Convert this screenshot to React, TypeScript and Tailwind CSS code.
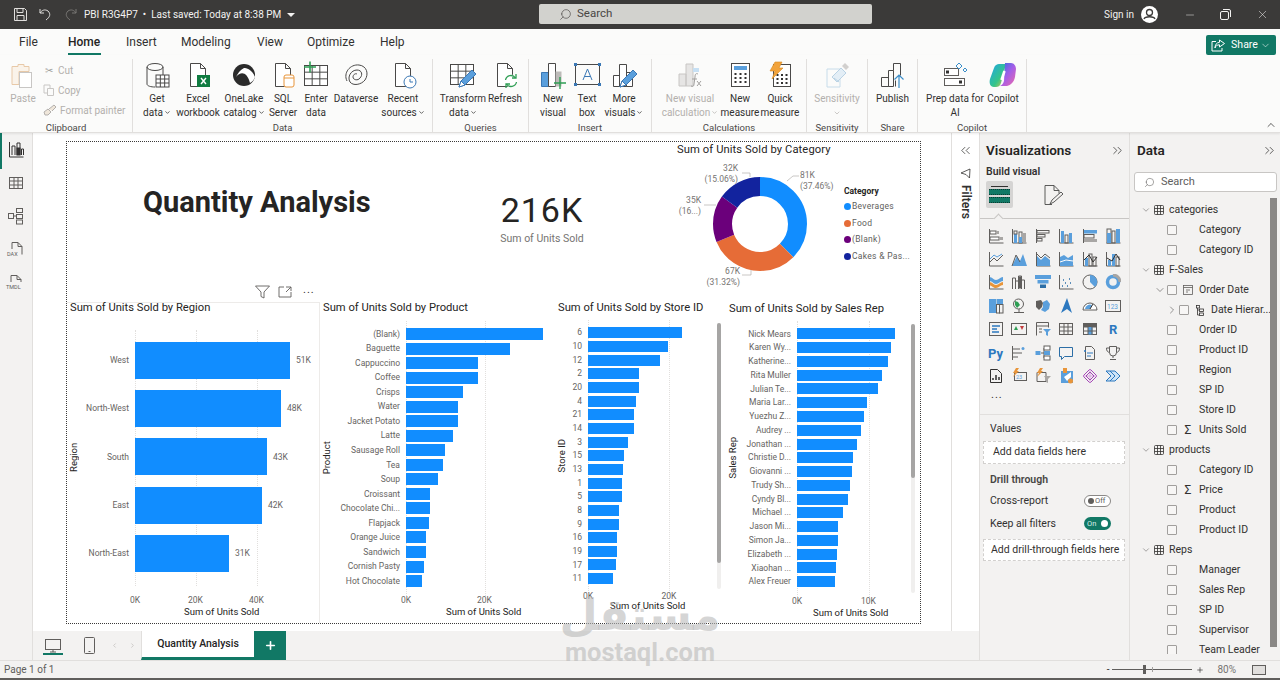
import { ReactNode } from 'react'
import { ChevronDown, ChevronRight, ChevronUp, ChevronsLeft, ChevronsRight, Minus, Plus, Search, X } from 'lucide-react'

const BLUE = '#118dff'
const DK = '#605e5c'
const LB = '#5a9fdc'
const GR = '#a8a6a4'

type Bar = { label: string; len: number; value?: string }

type ChartProps = {
    title: string
    axis: string
    bars: Bar[]
    width: string
    titleBox: string
    axisBox: string
    labelBox: string
    rowBox: string
    barBox: string
    plotLeft: number
    ticks: { at: number; label: string }[]
    footBox: string
    axisTitleLeft: number
}

const BarChart = (c: ChartProps) => (
    <div className={`relative flex flex-col shrink-0 font-['Roboto',sans-serif] ${c.width}`}>
        <div className={`text-[11.2px] leading-[12px] text-[#252423] whitespace-nowrap ${c.titleBox}`}>{c.title}</div>
        <div className="relative flex">
            <div className={`flex items-center justify-center text-[9.5px] text-[#252423] [writing-mode:vertical-rl] rotate-180 ${c.axisBox}`}>{c.axis}</div>
            <div className="relative flex flex-col">
                {c.ticks.map(t => (
                    <div key={t.label} className="absolute top-[-6px] bottom-[-8px] w-0 border-l border-dotted border-[#e1dfdd]" style={{ left: c.plotLeft + t.at }} />
                ))}
                {c.bars.map(b => (
                    <div key={b.label} className={`relative flex items-center ${c.rowBox}`}>
                        <span className={`shrink-0 text-right text-[8.5px] text-[#666462] whitespace-nowrap ${c.labelBox}`}>{b.label}</span>
                        <div className={`bg-[#118dff] ${c.barBox}`} style={{ width: b.len }} />
                        {b.value && <span className="ml-[6px] text-[8.5px] text-[#666462]">{b.value}</span>}
                    </div>
                ))}
            </div>
        </div>
        <div className={`relative ${c.footBox}`}>
            {c.ticks.map(t => (
                <span key={t.label} className="absolute top-0 -translate-x-1/2 text-[8.5px] leading-[12px] text-[#666462]" style={{ left: t.at + c.plotLeft + c.axisTitleLeft }}>{t.label}</span>
            ))}
        </div>
    </div>
)

const regionBars: Bar[] = [
    { label: 'West', len: 155, value: '51K' },
    { label: 'North-West', len: 146, value: '48K' },
    { label: 'South', len: 132, value: '43K' },
    { label: 'East', len: 127, value: '42K' },
    { label: 'North-East', len: 94, value: '31K' },
]
const productBars: Bar[] = [
    ['(Blank)', 137], ['Baguette', 104], ['Cappuccino', 72], ['Coffee', 72], ['Crisps', 57], ['Water', 52], ['Jacket Potato', 52], ['Latte', 47],
    ['Sausage Roll', 39], ['Tea', 37], ['Soup', 32], ['Croissant', 24], ['Chocolate Chi...', 24], ['Flapjack', 23], ['Orange Juice', 20], ['Sandwich', 19.5], ['Cornish Pasty', 17.5], ['Hot Chocolate', 16],
].map(([label, len]) => ({ label: label as string, len: len as number }))
const storeBars: Bar[] = [
    ['6', 94], ['10', 80], ['12', 72], ['2', 51], ['20', 51], ['4', 48], ['21', 46], ['14', 46], ['3', 40], ['15', 36], ['13', 35], ['1', 34], ['5', 34], ['8', 31], ['9', 31], ['16', 29], ['19', 29], ['17', 28], ['11', 25],
].map(([label, len]) => ({ label: label as string, len: len as number }))
const repBars: Bar[] = [
    ['Nick Mears', 98], ['Karen Wy...', 94], ['Katherine...', 91], ['Rita Muller', 85], ['Julian Te...', 81], ['Maria Lar...', 70], ['Yuezhu Z...', 67], ['Audrey ...', 64], ['Jonathan ...', 60], ['Christie D...', 56],
    ['Giovanni ...', 55], ['Trudy Sh...', 53], ['Cyndy Bl...', 51], ['Michael ...', 46], ['Jason Mi...', 41], ['Simon Ja...', 41], ['Elizabeth ...', 40], ['Xiaohan ...', 39], ['Alex Freuer', 38],
].map(([label, len]) => ({ label: label as string, len: len as number }))

const Ic = ({ children, s = 28, v = 28 }: { children: ReactNode; s?: number; v?: number }) => (
    <svg width={s} height={s} viewBox={`0 0 ${v} ${v}`} fill="none" stroke="#4a4948" strokeWidth="1">{children}</svg>
)

const Doc = ({ c = '#4a4948' }: { c?: string }) => <path d="M6.5 2.5h10l5 5v18h-15zM16.5 2.5v5h5" stroke={c} fill="#fff" />
const GridBox = ({ x, y, w, h, c = '#4a4948' }: { x: number; y: number; w: number; h: number; c?: string }) => (
    <g stroke={c}>
        <rect x={x} y={y} width={w} height={h} fill="#fff" />
        <path d={`M${x} ${y + h / 3}h${w}M${x} ${y + (2 * h) / 3}h${w}M${x + w / 3} ${y}v${h}M${x + (2 * w) / 3} ${y}v${h}`} />
    </g>
)
const Bars3 = ({ c = '#4a4948' }: { c?: string }) => <path d="M3.5 25.5v-11h6v11zM9.5 25.5v-22h7v22zM16.5 25.5v-14h6v14z" stroke={c} fill="#fff" />
const Pencil = () => <g><path d="M10 26l2-6 11-11 4 4-11 11z" fill="#5a9fdc" stroke="#3b78b5" /><path d="M10 26l2-6 4 4z" fill="#fff" stroke="#3b78b5" /></g>

const ribbonIcons: Record<string, ReactNode> = {
    get: <Ic><ellipse cx="12" cy="6" rx="8" ry="3.5" /><path d="M4 6v17c0 2 4 3 8 3M20 6v8" /><GridBox x={13} y={14} w={13} h={12} /></Ic>,
    excel: <Ic><Doc /><rect x="13" y="14" width="13" height="12" fill="#107c41" stroke="none" /><path d="M17 17l5 6M22 17l-5 6" stroke="#fff" strokeWidth="1.4" /></Ic>,
    lake: <Ic><circle cx="14" cy="14" r="11" fill="#2b2b2b" stroke="none" /><path d="M6 16c5-6 11-5 14 6 2-1 4-3 5-6-3-8-9-9-11-9-4 2-6 5-8 9z" fill="#fff" stroke="none" /></Ic>,
    sql: <Ic><Doc /><rect x="15" y="14" width="10" height="12" rx="2" fill="#fff" stroke="#e8953a" /><path d="M15 17h10" stroke="#e8953a" /></Ic>,
    enter: <Ic><GridBox x={2.5} y={4.5} w={23} h={20} /><path d="M8 0.5v11M2 6h12" stroke="#2f9e54" strokeWidth="1.6" /></Ic>,
    dataverse: <Ic><path d="M5 20C1 12 8 3 17 4c8 1 10 9 6 15-4 5-12 6-15 2C5 16 9 9 15 9c5 0 6 5 3 8-2 3-7 2-7-1 0-2 2-4 4-3" /></Ic>,
    recent: <Ic><Doc /><circle cx="21" cy="21" r="6" fill="#fff" stroke="#3b78b5" /><path d="M21 18v3h3" stroke="#3b78b5" /></Ic>,
    transform: <Ic><GridBox x={1.5} y={3.5} w={23} h={20} /><Pencil /></Ic>,
    refresh: <Ic><Doc /><circle cx="20" cy="20" r="6.5" fill="#fff" stroke="none" /><path d="M14.5 19a5.5 5.5 0 0 1 10-2M25.5 21a5.5 5.5 0 0 1-10 2" stroke="#2f9e54" strokeWidth="1.3" /><path d="M25 13v4h-4M15 27v-4h4" stroke="#2f9e54" strokeWidth="1.3" /></Ic>,
    newvisual: <Ic><path d="M2.5 25.5v-14h7v14z" fill="#5a9fdc" stroke="#3b78b5" /><path d="M9.5 25.5v-23h7v23z" fill="#fff" /><path d="M16.5 25.5v-15h6v15z" fill="#bdbbb9" stroke="none" /><path d="M21 16v12M15 22h12" stroke="#2f9e54" strokeWidth="1.4" /></Ic>,
    textbox: <Ic><rect x="2.5" y="3.5" width="24" height="20" stroke="#4a4948" /><rect x="1" y="2" width="3" height="3" fill="#3b78b5" stroke="none" /><rect x="25" y="2" width="3" height="3" fill="#3b78b5" stroke="none" /><rect x="1" y="22" width="3" height="3" fill="#3b78b5" stroke="none" /><rect x="25" y="22" width="3" height="3" fill="#3b78b5" stroke="none" /><path d="M10 19l4.5-11 4.5 11M11.5 15.5h6" stroke="#3b78b5" /></Ic>,
    more: <Ic><Bars3 /><Pencil /></Ic>,
    calc: <Ic><path d="M3 25V13h7v12zM10 25V3h7v22z" fill="#e6e5e4" stroke="#c8c6c4" /><path d="M17 7h6v4h-6z" fill="#c7e0f4" stroke="none" /><path d="M22 13c-2-1-3 0-3 3l-1 7c0 2-1 3-3 2M16 18h5M21 20l4 5M25 20l-4 5" stroke="#a19f9d" /></Ic>,
    measure: <Ic><rect x="5.5" y="2.5" width="18" height="23" stroke="#4a4948" fill="#fff" /><rect x="8" y="5" width="13" height="4" fill="#5a9fdc" stroke="none" /><path d="M8.5 13h2M13.5 13h2M18.5 13h2M8.5 17h2M13.5 17h2M18.5 17h2M8.5 21h2M13.5 21h2M18.5 21h2" stroke="#323130" strokeWidth="2" /></Ic>,
    quick: <Ic><rect x="7.5" y="3.5" width="17" height="22" stroke="#4a4948" fill="#fff" /><path d="M10.5 14h2M15 14h2M19.5 14h2M10.5 18h2M15 18h2M19.5 18h2M10.5 22h2M15 22h2M19.5 22h2" stroke="#323130" strokeWidth="2" /><path d="M9 1h7l-3 6h4L6 18l3-8H4z" fill="#f2a33a" stroke="#d98a1f" strokeWidth="0.6" /></Ic>,
    sens: <Ic><path d="M4 8h13v18H4z" stroke="#c7dcea" /><path d="M9 16l9-9 5 5-9 9z" fill="#e3eef6" stroke="#b9d2e4" /><path d="M19 5l3-3 4 4-3 3z" fill="#d2d0ce" stroke="none" /><path d="M11 17l5 4" stroke="#b9d2e4" /></Ic>,
    publish: <Ic><path d="M2.5 25.5v-9h7v9zM9.5 25.5v-16h5v16zM14.5 9.5v-7h7v12" /><path d="M16.5 25.5v-6" /><path d="M20 27V14M15.5 18.5L20 14l4.5 4.5" stroke="#3b8ec9" strokeWidth="1.2" /></Ic>,
    prep: <Ic><rect x="3.5" y="7.5" width="14" height="7" stroke="#605e5c" fill="#fff" /><rect x="3.5" y="17.5" width="20" height="7" stroke="#605e5c" fill="#fff" /><rect x="5" y="9.5" width="3" height="3" fill="#323130" stroke="none" /><rect x="18" y="19.5" width="3" height="3" fill="#323130" stroke="none" /><path d="M18 2l3 3-3 3-3-3zM24 7l2 2-2 2-2-2z" stroke="#3b8ec9" /></Ic>,
    copilot: (
        <svg width="28" height="28" viewBox="0 0 28 28">
            <defs>
                <linearGradient id="cpA" x1="0" y1="0" x2="1" y2="1"><stop offset="0" stopColor="#1fa5e8" /><stop offset="0.6" stopColor="#35c58a" /><stop offset="1" stopColor="#f4c13c" /></linearGradient>
                <linearGradient id="cpB" x1="0" y1="0" x2="1" y2="1"><stop offset="0" stopColor="#2a6fe0" /><stop offset="0.5" stopColor="#a45ee8" /><stop offset="1" stopColor="#f06aa8" /></linearGradient>
            </defs>
            <path d="M10 3h7l-5 19c-1 3-3 4-5 4H5C1 26 0 22 1 18L5 7c1-3 3-4 5-4z" fill="url(#cpA)" />
            <path d="M16 2h6c3 0 5 3 5 6l-1 8c-1 5-4 8-8 9h-7c2-1 3-2 4-5z" fill="url(#cpB)" />
            <path d="M15.5 10c-1 3-2 6-3 9" stroke="#fff" strokeWidth="2.6" />
        </svg>
    ),
    paste: <Ic><path d="M3 5.5h6v-2h6v2h5v5H10v13H3z" stroke="#e8c9a8" fill="#faf3ea" /><rect x="10.5" y="11.5" width="12" height="15" stroke="#c8c6c4" fill="#fff" /></Ic>,
}

const RibbonBtn = ({ w, icon, lines, off, arrow }: { w: string; icon: string; lines: string[]; off?: boolean; arrow?: boolean }) => (
    <div className={`flex flex-col items-center shrink-0 ${w}`}>
        <div className="h-[31px] mb-[2px] flex items-center justify-center">{ribbonIcons[icon]}</div>
        <div className={`text-[10px] leading-[13.5px] text-center whitespace-nowrap ${off ? 'text-[#b3b0ad]' : 'text-[#323130]'}`}>
            {lines.map((l, i) => (
                <div key={l}>{l}{arrow && i === lines.length - 1 && <ChevronDown className="inline ml-[1px]" size={7} strokeWidth={2.5} />}</div>
            ))}
        </div>
    </div>
)

const Group = ({ w, pl, name, children }: { w: string; pl: string; name: string; children: ReactNode }) => (
    <div className={`relative flex flex-col shrink-0 h-[74px] border-r border-[#e1dfdd] ${w}`}>
        <div className={`flex ${pl}`}>{children}</div>
        <div className="mt-auto text-center text-[9.5px] leading-[10px] text-[#4a4948]">{name}</div>
    </div>
)

const g = { fill: 'none', stroke: DK }
const vizIcons: ReactNode[] = [
    <g {...g}><path d="M1.5 1v14h14" /><rect x="2" y="3" width="6" height="3" fill="#fff" /><rect x="8" y="3" width="3" height="3" fill={GR} stroke="none" /><rect x="2" y="9" width="9" height="3" fill="#fff" /><rect x="11" y="9" width="4" height="3" fill={GR} stroke="none" /></g>,
    <g {...g}><path d="M1.5 1v14h14" /><rect x="3" y="6" width="3" height="9" fill={LB} stroke="none" /><rect x="3" y="3" width="3" height="3" /><rect x="8" y="4" width="3" height="11" /><rect x="8" y="9" width="3" height="6" fill={LB} stroke="none" /><rect x="12" y="5" width="3" height="10" fill={GR} stroke="none" /></g>,
    <g {...g}><path d="M1.5 1v14" /><rect x="2" y="2.5" width="12" height="2.5" /><rect x="2" y="6.5" width="8" height="2.5" /><rect x="2" y="10.5" width="5" height="2.5" /></g>,
    <g {...g}><path d="M1.5 1v14h14" /><rect x="3" y="3" width="3" height="12" fill={LB} stroke="none" /><rect x="7" y="7" width="3" height="8" /><rect x="11" y="5" width="3" height="10" fill={LB} stroke="none" /></g>,
    <g {...g}><path d="M1.5 1v14" /><rect x="2" y="2" width="13" height="3.5" fill={LB} stroke="none" /><rect x="2" y="6.5" width="10" height="3.5" /><rect x="2" y="11" width="13" height="3" fill={GR} stroke="none" /></g>,
    <g {...g}><path d="M1.5 15h14" /><rect x="2" y="1" width="4" height="14" /><rect x="2" y="5" width="4" height="10" fill={LB} stroke="none" /><rect x="7" y="3" width="3" height="12" /><rect x="11" y="1" width="4" height="14" fill={LB} stroke="none" /></g>,
    <g {...g}><path d="M1.5 1v14h14" /><path d="M2 11l4-4 3 3 6-6" /><path d="M2 8l4-4 3 2 5-3" stroke={LB} /></g>,
    <g {...g}><path d="M1 15l5-10 3 5 3-7 4 12z" fill={LB} stroke="none" /><path d="M1 15l4-11 4 7" /></g>,
    <g {...g}><path d="M1.5 1v14h14" /><path d="M2 5l4 4 4-4 5 4v6H2z" fill={LB} stroke="none" /><path d="M2 3l4 4 4-4 5 4" /></g>,
    <g {...g}><path d="M1.5 1v14h14" /><path d="M2 6l4-2 4 3 5-3v11H2z" fill={LB} stroke="none" /><path d="M2 11l6-2 7 1" stroke="#fff" /></g>,
    <g {...g}><path d="M1.5 1v14h14" /><rect x="3" y="7" width="3" height="8" fill={LB} stroke="none" /><rect x="7" y="3" width="3" height="12" /><rect x="11" y="6" width="3" height="9" /><path d="M2 9l5-5 4 7 4-5" stroke="#323130" /></g>,
    <g {...g}><path d="M1.5 1v14h14" /><rect x="3" y="9" width="3" height="6" fill={LB} stroke="none" /><rect x="7" y="3" width="3" height="12" fill={LB} stroke="none" /><rect x="11" y="6" width="3" height="9" /><path d="M2 7l5 3 4-7 4 6" stroke="#323130" /></g>,
    <g {...g}><path d="M1 3c4 0 4 3 7 3s4-3 7-3v4c-3 0-4 3-7 3S5 7 1 7z" fill={LB} stroke="none" /><path d="M1 8c4 0 4 3 7 3s4-3 7-3v3c-3 0-4 3-7 3s-3-2-7-3z" fill="#e8953a" stroke="none" /><path d="M1.5 1v14h14" /></g>,
    <g {...g}><path d="M1.5 15V4h3v11M4.5 15V7h3v8M7.5 15V2h3v13M10.5 15V6h3v9" /><rect x="8" y="2.5" width="2" height="12" fill={DK} stroke="none" /></g>,
    <g><rect x="0" y="1" width="16" height="4" fill={LB} /><rect x="2.5" y="6" width="11" height="3.5" fill={LB} /><rect x="5" y="10.5" width="6" height="3.5" fill="#2c6ea6" /></g>,
    <g {...g}><path d="M1.5 1v14h14" /><path d="M4 12h1M7 9h1M5 6h1M11 5h1M12 9h1M9 12h1" stroke="#2c6ea6" strokeWidth="1.6" /></g>,
    <g {...g}><circle cx="8" cy="8" r="7" /><path d="M8 1v7l5 5a7 7 0 0 0-5-12z" fill={LB} stroke="none" /></g>,
    <g fill="none"><circle cx="8" cy="8" r="5.5" stroke={LB} strokeWidth="3.5" /><path d="M8 1a7 7 0 0 1 7 7" stroke={GR} strokeWidth="3" /></g>,
    <g {...g}><rect x="1" y="1" width="7" height="14" fill={LB} stroke="none" /><rect x="8.5" y="1" width="6.5" height="5" fill={LB} stroke="none" /><rect x="8.5" y="6.5" width="3" height="8.5" /><rect x="11.5" y="6.5" width="3.5" height="8.5" /></g>,
    <g {...g}><circle cx="7.5" cy="6" r="5" /><path d="M4 3l3 1 2 3-3 3-2-3z" fill="#2f9e54" stroke="none" /><path d="M3 14.5h10M8 11v3" /></g>,
    <g><path d="M1 3l5-1 2 3-1 4-3 3-3-3z" fill={DK} /><path d="M8 4l4-2 3 4-1 5-4 3-4-2 2-3z" fill={LB} /></g>,
    <g><path d="M9 0l5 15-5-4-6 4z" fill="#2c78bf" /></g>,
    <g {...g}><path d="M1 12a7 7 0 0 1 14 0z" fill="#fff" /><path d="M3 11a5 5 0 0 1 7-4l-2 4z" fill={LB} stroke="none" /><path d="M8 11l3-5" stroke="#323130" /></g>,
    <g {...g}><rect x="0.5" y="2.5" width="15" height="11" /><text x="2" y="11" fontSize="6.5" fill={LB} stroke="none" fontFamily="Roboto">123</text></g>,
    <g {...g}><rect x="1.5" y="1.5" width="13" height="13" /><path d="M4 5h8M4 8h5M4 11h7" stroke="#2c78bf" strokeWidth="1.4" /></g>,
    <g {...g}><rect x="0.5" y="2.5" width="15" height="11" /><path d="M3 9l2-4 2 4z" fill="#2f9e54" stroke="none" /><path d="M9 5h4l-2 4z" fill="#c43e3e" stroke="none" /></g>,
    <g {...g}><path d="M1.5 14.5v-13h12v5M1.5 5h12M4 8h3M4 11h3" /><path d="M8 8h8l-3 3v4l-2-1v-3z" fill={LB} stroke="none" /></g>,
    <g {...g}><rect x="1.5" y="2.5" width="13" height="11" /><path d="M1.5 6h13M1.5 10h13M6 2.5v11M10 2.5v11" /></g>,
    <g {...g}><rect x="1.5" y="2.5" width="13" height="11" /><rect x="1.5" y="2.5" width="13" height="3.5" fill={DK} /><rect x="6" y="6" width="4.5" height="7.5" fill={LB} stroke="none" /><path d="M1.5 10h13M6 6v8M10 6v8" /></g>,
    <text x="4" y="13" fontSize="13" fontWeight="700" fill="#2c78bf" fontFamily="Roboto">R</text>,
    <text x="0" y="13" fontSize="13" fontWeight="700" fill="#2c78bf" fontFamily="Roboto">Py</text>,
    <g {...g}><path d="M1.5 1v14" /><path d="M2 4h7M2 8h9M2 12h5" /><circle cx="12" cy="3.5" r="1.5" fill={LB} stroke="none" /></g>,
    <g {...g}><rect x="0.5" y="6" width="5" height="4" fill={LB} stroke="none" /><path d="M6 8h3M9 3v10" /><rect x="9" y="1" width="6" height="4" fill="#fff" /><rect x="9" y="6" width="6" height="4" fill={LB} stroke="none" /><rect x="9" y="11" width="6" height="4" fill="#fff" /></g>,
    <g {...g}><path d="M1.5 2.5h13v9h-8l-3 3v-3h-2z" stroke="#2c6ea6" /></g>,
    <g {...g}><path d="M3.5 1.5h6l3 3v10h-9z" /><path d="M5 8h6M5 11h4" stroke="#2c78bf" /><circle cx="3" cy="6" r="1" fill="#2c78bf" stroke="none" /></g>,
    <g {...g}><path d="M4.5 1.5h7v6a3.5 3.5 0 0 1-7 0zM4.5 3H1.5c0 3 1 4 3 4.5M11.5 3h3c0 3-1 4-3 4.5M8 11v2M5 14.5h6" /></g>,
    <g {...g}><path d="M2.5 1.5h7l4 4v9h-11z" stroke="#323130" /><path d="M5 12v-2M8 12V7M11 12V9" stroke="#323130" strokeWidth="1.5" /></g>,
    <g {...g}><rect x="3.5" y="4.5" width="12" height="8" /><text x="5" y="11" fontSize="5.5" fill={LB} stroke="none" fontFamily="Roboto">23</text><path d="M5 0h3L6 3h2L2 9l2-4H2z" fill="#e8953a" stroke="none" /></g>,
    <g {...g}><path d="M2 4.5h9v9h-9z" /><path d="M9 8h7l-3 3v4l-2-1v-3z" fill={GR} stroke="none" /><path d="M5 0h3L6 3h2L2 9l2-4H2z" fill="#e8953a" stroke="none" /></g>,
    <g><rect x="3" y="3" width="12" height="12" fill={LB} /><path d="M6 9l7-5v5l-4 4z" fill="#fff" /><rect x="5" y="0" width="4" height="5" fill="#e8953a" /><circle cx="12.5" cy="13" r="2.5" fill="#e8953a" /></g>,
    <g fill="none" stroke="#a347b5"><path d="M8 1l7 7-7 7-7-7z" /><path d="M8 1v14M1 8h14" stroke="#d6a6de" /><path d="M8 4l4 4-4 4-4-4z" /></g>,
    <g fill="none" stroke="#2c78bf"><path d="M1 3h9l5 5-5 5H1l5-5z" fill="#cfe4f6" /><path d="M5 3l5 5-5 5" /></g>,
]

const Table = () => (
    <svg width="10" height="10" viewBox="0 0 10 10" fill="none" stroke="#323130" strokeWidth="0.8">
        <rect x="0.5" y="0.5" width="9" height="9" rx="1" /><path d="M0.5 3.5h9M0.5 6.5h9M3.5 0.5v9M6.5 0.5v9" />
    </svg>
)
const Box = () => <span className="block w-[10px] h-[10px] shrink-0 border border-[#a19f9d] rounded-[1px] bg-[#f7f6f5]" />
const Sigma = () => <span className="text-[12px] leading-none text-[#323130]">Σ</span>

const TableRow = ({ name }: { name: string }) => (
    <div className="flex items-center h-[20px] pl-[11px] text-[10.5px] text-[#323130]">
        <ChevronDown size={10} strokeWidth={1} /><span className="ml-[3px]"><Table /></span><span className="ml-[5px]">{name}</span>
    </div>
)
const FieldRow = ({ name, icon }: { name: string; icon?: ReactNode }) => (
    <div className="flex items-center h-[20px] pl-[37px] text-[10.5px] text-[#323130]">
        <Box /><span className="w-[22px] flex justify-center">{icon}</span><span>{name}</span>
    </div>
)

const DataPanel = () => (
    <div className="relative flex flex-col w-[151px] shrink-0 bg-[#f3f2f1] border-l border-[#e1dfdd]">
        <div className="flex items-center justify-between h-[34px] pl-[7px] pr-[3px]">
            <span className="text-[13.5px] font-semibold text-[#252423]">Data</span>
            <ChevronsRight size={15} strokeWidth={1.2} className="text-[#323130]" />
        </div>
        <div className="flex items-center h-[20px] mt-[5px] ml-[4px] w-[143px] bg-white border border-[#c8c6c4] rounded-[3px] pl-[9px]">
            <Search size={11} strokeWidth={1.2} className="text-[#605e5c] -scale-x-100" />
            <span className="ml-[6px] text-[11px] text-[#605e5c]">Search</span>
        </div>
        <div className="mt-[8px] h-[454px] overflow-hidden">
            <TableRow name="categories" />
            <FieldRow name="Category" />
            <FieldRow name="Category ID" />
            <TableRow name="F-Sales" />
            <div className="flex items-center h-[20px] pl-[23px] text-[10.5px] text-[#323130]">
                <ChevronDown size={12} strokeWidth={1} className="w-[14px]" /><Box />
                <span className="w-[22px] flex justify-center">
                    <svg width="10" height="10" viewBox="0 0 10 10" fill="none" stroke="#605e5c" strokeWidth="0.8"><rect x="0.5" y="0.5" width="9" height="9" /><path d="M0.5 2.5h9M3 5h4M3 7h2" /></svg>
                </span>
                <span>Order Date</span>
            </div>
            <div className="flex items-center h-[20px] pl-[35px] text-[10.5px] text-[#323130] whitespace-nowrap">
                <ChevronRight size={12} strokeWidth={1} className="w-[14px]" /><Box />
                <span className="w-[22px] flex justify-center">
                    <svg width="8" height="11" viewBox="0 0 8 11" fill="none" stroke="#323130" strokeWidth="0.8"><rect x="0.5" y="0.5" width="3" height="2.5" /><rect x="3.5" y="4" width="4" height="2.5" /><rect x="3.5" y="8" width="4" height="2.5" /><path d="M1.5 3v7h2M1.5 5h2" /></svg>
                </span>
                <span>Date Hierar...</span>
            </div>
            <FieldRow name="Order ID" />
            <FieldRow name="Product ID" />
            <FieldRow name="Region" />
            <FieldRow name="SP ID" />
            <FieldRow name="Store ID" />
            <FieldRow name="Units Sold" icon={<Sigma />} />
            <TableRow name="products" />
            <FieldRow name="Category ID" />
            <FieldRow name="Price" icon={<Sigma />} />
            <FieldRow name="Product" />
            <FieldRow name="Product ID" />
            <TableRow name="Reps" />
            <FieldRow name="Manager" />
            <FieldRow name="Sales Rep" />
            <FieldRow name="SP ID" />
            <FieldRow name="Supervisor" />
            <FieldRow name="Team Leader" />
        </div>
        <div className="absolute right-[3px] top-[65px] w-[7px] h-[449px] bg-[#8a8886]" />
    </div>
)

const VizPanel = () => (
    <div className="flex flex-col w-[150px] shrink-0 bg-[#f3f2f1] border-l border-[#e1dfdd]">
        <div className="flex items-center justify-between h-[34px] pl-[6px] pr-[4px]">
            <span className="text-[13.5px] font-semibold text-[#252423]">Visualizations</span>
            <ChevronsRight size={15} strokeWidth={1.2} className="text-[#323130]" />
        </div>
        <div className="pl-[6px] h-[10px] flex items-center text-[10.5px] font-semibold text-[#323130]">Build visual</div>
        <div className="flex items-center mt-[4px] pl-[6px] h-[27px]">
            <div className="flex flex-col items-center justify-center gap-[2px] w-[27px] h-[27px] bg-[#d5d4d3] rounded-[2px]">
                <div className="w-[17px] h-[1px] bg-[#323130]" />
                <div className="w-[21px] h-[6px] bg-[#117865] border-y border-dotted border-[#0b3b32]" />
                <div className="w-[21px] h-[6px] bg-[#117865] border-y border-dotted border-[#0b3b32]" />
            </div>
            <span className="ml-[29px]">
                <svg width="22" height="22" viewBox="0 0 22 22" fill="none" stroke="#4a4948" strokeWidth="0.9">
                    <path d="M3 1.5h9l5 5v3M12 1.5v5h5M3 1.5v19h7" /><path d="M8 20l2-4 9-8 2 2-9 8z" />
                </svg>
            </span>
        </div>
        <div className="relative mt-[10px] h-[1px] bg-[#c8c6c4]">
            <div className="absolute left-[15px] -top-[3px] w-[7px] h-[7px] rotate-45 bg-[#f3f2f1] border-l border-t border-[#c8c6c4]" />
        </div>
        <div className="grid grid-cols-6 mt-[5px] pl-[4px] w-[145px]">
            {vizIcons.map((ic, i) => (
                <div key={i} className="h-[23.4px] flex items-center justify-center">
                    <svg width="16" height="16" viewBox="0 0 16 16">{ic}</svg>
                </div>
            ))}
        </div>
        <div className="pl-[11px] h-[18px] text-[11px] leading-[14px] tracking-[1px] text-[#323130]">...</div>
        <div className="mt-[8px] h-[1px] bg-[#e1dfdd]" />
        <div className="mt-[8px] pl-[10px] h-[12px] flex items-center text-[10.5px] text-[#323130]">Values</div>
        <div className="mt-[6px] ml-[3px] w-[142px] h-[23px] flex items-center pl-[9px] bg-white border border-dashed border-[#d2d0ce] text-[10.5px] text-[#323130]">Add data fields here</div>
        <div className="mt-[10px] pl-[10px] h-[12px] flex items-center text-[10.5px] font-semibold text-[#484644]">Drill through</div>
        <div className="mt-[9px] pl-[10px] pr-[18px] flex items-center justify-between h-[12px] text-[10.5px] text-[#323130]">
            <span>Cross-report</span>
            <span className="flex items-center w-[27px] h-[12px] pl-[3px] rounded-full border border-[#8a8886] bg-white">
                <span className="w-[6px] h-[6px] rounded-full bg-[#605e5c]" /><span className="ml-[1px] text-[7.5px] leading-none text-[#605e5c]">Off</span>
            </span>
        </div>
        <div className="mt-[11px] pl-[10px] pr-[18px] flex items-center justify-between h-[12px] text-[10.5px] text-[#323130]">
            <span>Keep all filters</span>
            <span className="flex items-center justify-between w-[27px] h-[13px] px-[3px] rounded-full bg-[#117865]">
                <span className="text-[7.5px] leading-none text-[#d8ece8]">On</span><span className="w-[7px] h-[7px] rounded-full bg-white" />
            </span>
        </div>
        <div className="mt-[9px] ml-[3px] w-[142px] h-[22px] flex items-center pl-[7px] bg-white border border-dashed border-[#d2d0ce] text-[10.5px] text-[#323130] whitespace-nowrap">Add drill-through fields here</div>
    </div>
)

const DonutLabel = ({ x, y, a, b }: { x: number; y: number; a: string; b: string }) => (
    <text fontSize="8.5" fill="#767472" fontFamily="Roboto" textAnchor="end" stroke="none">
        <tspan x={x} y={y}>{a}</tspan><tspan x={x} y={y + 11}>{b}</tspan>
    </text>
)

const Donut = () => {
    const parts = [
        { c: BLUE, v: 37.46 },
        { c: '#e66c37', v: 31.32 },
        { c: '#6b007b', v: 16.16 },
        { c: '#12239e', v: 15.06 },
    ]
    let run = 0
    return (
        <svg width="170" height="135" viewBox="0 0 170 135" fill="none" stroke="#b3b0ad" strokeWidth="0.7">
            <g transform="rotate(-90 88 64)">
                {parts.map(p => {
                    const off = -run
                    run += p.v
                    return <circle key={p.c} cx="88" cy="64" r="37.5" pathLength={100} stroke={p.c} strokeWidth="19" strokeDasharray={`${p.v} ${100 - p.v}`} strokeDashoffset={off} />
                })}
            </g>
            <path d="M115 21l6-5h6M70 13h8v4M32 45h12M70 115h9v-5" />
            <text fontSize="8.5" fill="#767472" fontFamily="Roboto" stroke="none">
                <tspan x="128" y="18">81K</tspan><tspan x="128" y="29">(37.46%)</tspan>
            </text>
            <DonutLabel x={66} y={11} a="32K" b="(15.06%)" />
            <DonutLabel x={29} y={43} a="35K" b="(16...)" />
            <DonutLabel x={68} y={114} a="67K" b="(31.32%)" />
        </svg>
    )
}

const Legend = ({ c, t }: { c: string; t: string }) => (
    <div className="flex items-center h-[16.7px] text-[8.5px] tracking-[0.3px] text-[#605e5c] whitespace-nowrap">
        <span className={`w-[7px] h-[7px] rounded-full mr-[1px] ${c}`} />{t}
    </div>
)

const Report = () => (
    <div className="relative flex flex-col w-[855px] h-[483px] border border-dotted border-[#3b3a39]">
        <div className="flex h-[160px] shrink-0">
            <div className="w-[385px] pl-[76px] pt-[39px] text-[29px] leading-[42px] font-bold text-[#252423] whitespace-nowrap">Quantity Analysis</div>
            <div className="w-[180px] mr-[40px] pt-[46px] font-['Roboto',sans-serif]">
                <div className="text-[34px] leading-[44px] tracking-[1px] text-[#252423] text-center">216K</div>
                <div className="text-[10.5px] leading-[14px] text-[#767472] text-center">Sum of Units Sold</div>
            </div>
            <div className="flex-1 relative font-['Roboto',sans-serif]">
                <div className="pl-[5px] pt-[1px] text-[11.2px] tracking-[0.1px] leading-[14px] text-[#252423] whitespace-nowrap">Sum of Units Sold by Category</div>
                <div className="flex mt-[3px]">
                    <Donut />
                    <div className="pt-[25px] pl-[2px]">
                        <div className="text-[8.5px] font-bold leading-[12px] text-[#252423] mb-[1px]">Category</div>
                        <Legend c="bg-[#118dff]" t="Beverages" />
                        <Legend c="bg-[#e66c37]" t="Food" />
                        <Legend c="bg-[#6b007b]" t="(Blank)" />
                        <Legend c="bg-[#12239e]" t="Cakes & Pas..." />
                    </div>
                </div>
            </div>
        </div>
        <div className="flex flex-1 min-h-0">
            <div className="shrink-0 border-t border-r border-[#edebe9] w-[253px]">
                <BarChart
                    title="Sum of Units Sold by Region"
                    axis="Region"
                    bars={regionBars}
                    width="w-[252px]"
                    titleBox="pl-[3px] -mt-[1px] h-[34px]"
                    axisBox="w-[14px]"
                    labelBox="w-[48px] mr-[6px]"
                    rowBox="h-[48.4px]"
                    barBox="h-[37px]"
                    plotLeft={54}
                    ticks={[{ at: 0, label: '0K' }, { at: 60.5, label: '20K' }, { at: 121.5, label: '40K' }]}
                    footBox="h-[22px] mt-[16px]"
                    axisTitleLeft={14}
                />
                <div className="-mt-[10px] pl-[117px] text-[9.5px] leading-[12px] font-['Roboto',sans-serif] text-[#252423]">Sum of Units Sold</div>
            </div>
            <div className="shrink-0 w-[235px]">
                <BarChart
                    title="Sum of Units Sold by Product"
                    axis="Product"
                    bars={productBars}
                    width="w-[235px]"
                    titleBox="pl-[3px] h-[25px]"
                    axisBox="w-[15px]"
                    labelBox="w-[65px] mr-[6px]"
                    rowBox="h-[14.53px]"
                    barBox="h-[12px]"
                    plotLeft={71}
                    ticks={[{ at: 0, label: '0K' }, { at: 78.5, label: '20K' }]}
                    footBox="h-[22px] mt-[6px]"
                    axisTitleLeft={15}
                />
                <div className="-mt-[10px] pl-[126px] text-[9.5px] leading-[12px] font-['Roboto',sans-serif] text-[#252423]">Sum of Units Sold</div>
            </div>
            <div className="relative shrink-0 w-[170px]">
                <BarChart
                    title="Sum of Units Sold by Store ID"
                    axis="Store ID"
                    bars={storeBars}
                    width="w-[170px]"
                    titleBox="pl-[3px] h-[24px]"
                    axisBox="w-[15px]"
                    labelBox="w-[12px] mr-[6px]"
                    rowBox="h-[13.67px]"
                    barBox="h-[11px]"
                    plotLeft={18}
                    ticks={[{ at: 0, label: '0K' }, { at: 81, label: '20K' }]}
                    footBox="h-[19px] mt-[5px]"
                    axisTitleLeft={15}
                />
                <div className="-mt-[9px] pl-[55px] text-[9.5px] leading-[12px] font-['Roboto',sans-serif] text-[#252423] whitespace-nowrap">Sum of Units Sold</div>
                <div className="absolute left-[162px] top-[21px] w-[4px] h-[266px] bg-[#f0efee] rounded-full" />
                <div className="absolute left-[162px] top-[21px] w-[4px] h-[240px] bg-[#a6a5a4] rounded-full" />
            </div>
            <div className="relative shrink-0 w-[195px]">
                <BarChart
                    title="Sum of Units Sold by Sales Rep"
                    axis="Sales Rep"
                    bars={repBars}
                    width="w-[195px]"
                    titleBox="pl-[4px] pt-[1px] h-[25px]"
                    axisBox="w-[17px]"
                    labelBox="w-[49px] mr-[6px]"
                    rowBox="h-[13.78px]"
                    barBox="h-[11px]"
                    plotLeft={55}
                    ticks={[{ at: 0, label: '0K' }, { at: 71.5, label: '10K' }]}
                    footBox="h-[19px] mt-[6px]"
                    axisTitleLeft={17}
                />
                <div className="-mt-[7px] pl-[88px] text-[9.5px] leading-[12px] font-['Roboto',sans-serif] text-[#252423] whitespace-nowrap">Sum of Units Sold</div>
                <div className="absolute left-[186px] top-[22px] w-[4px] h-[269px] bg-[#f0efee] rounded-full" />
                <div className="absolute left-[186px] top-[22px] w-[4px] h-[154px] bg-[#a6a5a4] rounded-full" />
            </div>
        </div>
        <div className="absolute left-[188px] top-[143px] flex items-center gap-[8px]">
            <svg width="15" height="14" viewBox="0 0 15 14" fill="none" stroke="#605e5c" strokeWidth="0.9"><path d="M0.5 1h14L9 7v6l-3-1.5V7z" /></svg>
            <svg width="14" height="12" viewBox="0 0 14 12" fill="none" stroke="#605e5c" strokeWidth="0.9"><path d="M6 1H1v10h12V6M8 1h5v4M13 1L8 6" /></svg>
            <span className="ml-[3px] text-[11px] leading-none tracking-[1px] -mt-[6px] text-[#323130]">...</span>
        </div>
    </div>
)

const Rail = () => (
    <div className="relative flex flex-col items-center w-[33px] shrink-0 bg-[#f3f2f1] border-r border-[#e1dfdd] pt-[8px] gap-[15px]">
        <div className="absolute left-0 top-0 w-[2px] h-[36px] bg-[#117865]" />
        <svg width="18" height="18" viewBox="0 0 18 18" fill="none" stroke="#323130"><path d="M2.5 1v15h14" /><path d="M5 14V5h3v9M10 14V2h3v12" /><rect x="10" y="7" width="3" height="7" fill="#323130" /><path d="M14.5 14V8h2v6" /></svg>
        <svg width="18" height="18" viewBox="0 0 18 18" fill="none" stroke="#605e5c"><rect x="2.5" y="3.5" width="13" height="11" /><path d="M2.5 7h13M2.5 11h13M7 3.5v11M11 3.5v11" /></svg>
        <svg width="18" height="18" viewBox="0 0 18 18" fill="none" stroke="#605e5c"><rect x="1.5" y="6.5" width="5" height="5" /><rect x="9.5" y="1.5" width="6" height="4" /><rect x="9.5" y="7.5" width="6" height="4" /><rect x="9.5" y="13" width="6" height="4" /><path d="M6.5 9h3" /></svg>
        <svg width="20" height="18" viewBox="0 0 20 18" fill="none" stroke="#605e5c"><path d="M6 9V2.5h6l4 4v8" /><path d="M12 2.5v4h4" /><text x="1" y="16" fontSize="5.5" fill="#605e5c" stroke="none" fontFamily="Roboto">DAX</text></svg>
        <svg width="22" height="18" viewBox="0 0 22 18" fill="none" stroke="#605e5c"><path d="M6 9V2.5h6l4 4V9" /><path d="M12 2.5v4h4" /><text x="1" y="16" fontSize="5.5" fill="#605e5c" stroke="none" fontFamily="Roboto">TMDL</text></svg>
    </div>
)

const App = () => {
    return (
        <div className="relative flex flex-col w-[1280px] h-[680px] overflow-hidden bg-white font-['Roboto',sans-serif] text-[#323130]">
            {/* title bar */}
            <div className="relative flex items-center h-[29px] shrink-0 bg-[#3b3a39] text-[#f3f2f1]">
                <svg className="ml-[14px]" width="13" height="13" viewBox="0 0 13 13" fill="none" stroke="#e1dfdd"><path d="M0.5 0.5h10l2 2v10H0.5zM3 0.5v4h6v-4M3 12.5v-5h7v5" /></svg>
                <svg className="ml-[12px]" width="13" height="13" viewBox="0 0 13 13" fill="none" stroke="#e1dfdd"><path d="M1 1v4h4M1 5c2-3 5-4 8-2 3 3 2 6-2 9" /></svg>
                <svg className="ml-[12px]" width="13" height="13" viewBox="0 0 13 13" fill="none" stroke="#797775"><path d="M12 1v4H8M12 5c-2-3-5-4-8-2-3 3-2 6 2 9" /></svg>
                <span className="ml-[7px] text-[10px] whitespace-nowrap">PBI R3G4P7 &nbsp;•&nbsp; Last saved: Today at 8:38 PM</span>
                <span className="ml-[6px] w-0 h-0 border-x-[4px] border-x-transparent border-t-[4px] border-t-[#f3f2f1]" />
                <div className="absolute left-[539px] top-[4px] flex items-center w-[333px] h-[20px] bg-[#d2d2ce] rounded-[2px] pl-[20px] text-[#484644]">
                    <Search size={13} strokeWidth={1.2} className="-scale-x-100" />
                    <span className="ml-[5px] text-[11.5px]">Search</span>
                </div>
                <div className="ml-auto flex items-center">
                    <span className="text-[10px]">Sign in</span>
                    <svg className="ml-[7px]" width="17" height="17" viewBox="0 0 17 17"><circle cx="8.5" cy="8.5" r="8.5" fill="#fff" /><circle cx="8.5" cy="6.5" r="3" fill="none" stroke="#3b3a39" strokeWidth="1.3" /><path d="M3 13c1-3 10-3 11 0" fill="none" stroke="#3b3a39" strokeWidth="1.3" /></svg>
                    <Minus className="ml-[26px]" size={12} strokeWidth={1} />
                    <svg className="ml-[24px]" width="11" height="11" viewBox="0 0 11 11" fill="none" stroke="#f3f2f1"><rect x="0.5" y="2.5" width="8" height="8" rx="1.5" /><path d="M3 0.5h6a1.5 1.5 0 0 1 1.5 1.5v6" /></svg>
                    <X className="ml-[25px] mr-[11px]" size={13} strokeWidth={1} />
                </div>
            </div>
            {/* tabs */}
            <div className="relative flex items-center h-[26px] shrink-0 bg-[#fbfbfa] text-[12px] text-[#323130]">
                <span className="ml-[19px] w-[49px]">File</span>
                <span className="relative w-[58px] font-medium text-[#252423]">Home<span className="absolute left-0 top-[20px] w-[33px] h-[2px] bg-[#117865]" /></span>
                <span className="w-[55px]">Insert</span>
                <span className="w-[76px]">Modeling</span>
                <span className="w-[50px]">View</span>
                <span className="w-[73px]">Optimize</span>
                <span>Help</span>
                <div className="ml-auto mr-[4px] mt-[6px] flex items-center justify-center gap-[6px] w-[70px] h-[20px] rounded-[2px] bg-[#117865] text-white text-[10.5px]">
                    <svg width="14" height="13" viewBox="0 0 14 13" fill="none" stroke="#fff"><path d="M5 2.5H1V12h10V9" /><path d="M8.5 1l5 3.5-5 3.5V5.800C6 5.800 4.500 7 4 9c0-3 1.500-5.500 4.500-5.700z" /></svg>
                    <span className="flex items-center">Share<ChevronDown className="ml-[2px]" size={11} strokeWidth={1.2} /></span>
                </div>
            </div>
            {/* ribbon */}
            <div className="relative flex h-[78px] shrink-0 pt-[4px] bg-[#fbfbfa] border-b border-[#e1dfdd] shadow-[0_1px_2px_rgba(0,0,0,0.08)] z-10">
                <Group w="w-[133px]" pl="pl-[8px]" name="Clipboard">
                    <div className="flex flex-col items-center w-[30px]">
                        <div className="h-[31px] mb-[2px] flex items-center">{ribbonIcons.paste}</div>
                        <span className="text-[10px] leading-[13.5px] text-[#b3b0ad]">Paste</span>
                    </div>
                    <div className="ml-[5px] flex flex-col text-[10px] text-[#b3b0ad]">
                        <div className="flex items-center h-[20px] mt-[1px] gap-[3px]"><span className="w-[12px] text-center text-[#a19f9d]">✂</span>Cut</div>
                        <div className="flex items-center h-[20px] gap-[3px]"><svg width="12" height="12" viewBox="0 0 12 12" fill="none" stroke="#c8c6c4"><path d="M1 1h6v3M1 1v8h3" /><path d="M4.5 4.5h6v7h-6z" /></svg>Copy</div>
                        <div className="flex items-center h-[20px] gap-[3px] whitespace-nowrap"><svg width="14" height="12" viewBox="0 0 14 12" fill="none" stroke="#b3b0ad"><path d="M1 8l4-3 3 3-3 3H2zM6 5l5-4 2 2-4 4" fill="#efe6da" /></svg>Format painter</div>
                    </div>
                </Group>
                <Group w="w-[300px]" pl="pl-[4px]" name="Data">
                    <RibbonBtn w="w-[40px]" icon="get" lines={['Get', 'data']} arrow />
                    <RibbonBtn w="w-[42px]" icon="excel" lines={['Excel', 'workbook']} />
                    <RibbonBtn w="w-[50px]" icon="lake" lines={['OneLake', 'catalog']} arrow />
                    <RibbonBtn w="w-[28px]" icon="sql" lines={['SQL', 'Server']} />
                    <RibbonBtn w="w-[38px]" icon="enter" lines={['Enter', 'data']} />
                    <RibbonBtn w="w-[42px]" icon="dataverse" lines={['Dataverse']} />
                    <RibbonBtn w="w-[52px]" icon="recent" lines={['Recent', 'sources']} arrow />
                </Group>
                <Group w="w-[96px]" pl="pl-[4px]" name="Queries">
                    <RibbonBtn w="w-[52px]" icon="transform" lines={['Transform', 'data']} arrow />
                    <RibbonBtn w="w-[32px]" icon="refresh" lines={['Refresh']} />
                </Group>
                <Group w="w-[123px]" pl="pl-[4px]" name="Insert">
                    <RibbonBtn w="w-[40px]" icon="newvisual" lines={['New', 'visual']} />
                    <RibbonBtn w="w-[28px]" icon="textbox" lines={['Text', 'box']} />
                    <RibbonBtn w="w-[46px]" icon="more" lines={['More', 'visuals']} arrow />
                </Group>
                <Group w="w-[155px]" pl="pl-[8px]" name="Calculations">
                    <RibbonBtn w="w-[60px]" icon="calc" lines={['New visual', 'calculation']} off arrow />
                    <RibbonBtn w="w-[40px]" icon="measure" lines={['New', 'measure']} />
                    <RibbonBtn w="w-[40px]" icon="quick" lines={['Quick', 'measure']} />
                </Group>
                <Group w="w-[61px]" pl="pl-[0px]" name="Sensitivity">
                    <div className="flex flex-col items-center w-full">
                        <div className="h-[31px] mb-[2px] flex items-center">{ribbonIcons.sens}</div>
                        <span className="text-[10px] leading-[13.5px] text-[#b3b0ad]">Sensitivity</span>
                        <ChevronDown size={8} className="mt-[3px] text-[#b3b0ad]" />
                    </div>
                </Group>
                <Group w="w-[50px]" pl="pl-[0px]" name="Share">
                    <RibbonBtn w="w-full" icon="publish" lines={['Publish']} />
                </Group>
                <Group w="w-[109px]" pl="pl-[8px]" name="Copilot">
                    <RibbonBtn w="w-[58px]" icon="prep" lines={['Prep data for', 'AI']} />
                    <RibbonBtn w="w-[38px]" icon="copilot" lines={['Copilot']} />
                </Group>
                <ChevronUp className="absolute right-[3px] bottom-[1px] text-[#323130]" size={12} strokeWidth={1.5} />
            </div>
            {/* main */}
            <div className="flex flex-1 min-h-0">
                <Rail />
                <div className="flex flex-col w-[946px] shrink-0">
                    <div className="flex h-[498px] shrink-0">
                        <div className="w-[918px] shrink-0 pl-[33px] pt-[8px]"><Report /></div>
                        <div className="flex flex-col items-center w-[28px] border-l border-[#e1dfdd] pt-[10px] text-[#323130]">
                            <ChevronsLeft size={15} strokeWidth={1.2} />
                            <svg className="mt-[10px]" width="11" height="11" viewBox="0 0 11 11" fill="none" stroke="#323130" strokeWidth="0.8"><path d="M10 1L1 5l5 1.5L9.500 10z" /></svg>
                            <span className="mt-[6px] text-[12px] font-semibold [writing-mode:vertical-rl]">Filters</span>
                        </div>
                    </div>
                    <div className="flex items-stretch flex-1 bg-[#f3f2f1]">
                        <div className="flex items-center justify-center relative w-[40px] ml-[0px]">
                            <svg width="16" height="14" viewBox="0 0 16 14" fill="none" stroke="#605e5c"><rect x="0.5" y="0.5" width="15" height="10" /><path d="M5 13h6M8 11v2" /></svg>
                            <span className="absolute left-[10px] bottom-[5px] w-[20px] h-[2px] bg-[#117865]" />
                        </div>
                        <div className="flex items-center justify-center w-[33px]">
                            <svg width="11" height="17" viewBox="0 0 11 17" fill="none" stroke="#605e5c"><rect x="0.5" y="0.5" width="10" height="16" rx="1" /><path d="M4.5 14.5h2" /></svg>
                        </div>
                        <div className="flex items-center gap-[11px] pl-[5px] w-[35px] text-[#c8c6c4]"><ChevronRight className="rotate-180" size={7} strokeWidth={3} /><ChevronRight size={7} strokeWidth={3} /></div>
                        <div className="flex items-center justify-center w-[113px] bg-white border-l border-[#e1dfdd] border-b-[3px] border-b-[#117865] text-[10.5px] font-medium text-[#252423]">Quantity Analysis</div>
                        <div className="flex items-center justify-center w-[32px] bg-[#117865] text-white"><Plus size={13} strokeWidth={3} /></div>
                    </div>
                </div>
                <VizPanel />
                <DataPanel />
            </div>
            {/* status */}
            <div className="relative flex items-center h-[20px] shrink-0 pl-[4px] bg-[#f3f2f1] border-t border-[#e1dfdd] border-b-2 border-b-[#605e5c] text-[10px] text-[#605e5c]">
                <span>Page 1 of 1</span>
                <div className="ml-auto flex items-center pr-[14px]">
                    <span className="text-[#323130]">-</span>
                    <div className="relative ml-[3px] w-[80px] h-[1px] bg-[#605e5c]">
                        <span className="absolute left-[31px] -top-[4px] w-[3px] h-[9px] bg-[#605e5c]" />
                        <span className="absolute left-[40px] -top-[2px] w-[1px] h-[5px] bg-[#a19f9d]" />
                    </div>
                    <Plus className="ml-[4px] text-[#323130]" size={8} strokeWidth={2} />
                    <span className="ml-[13px] text-[10px] text-[#767472]">80%</span>
                    <svg className="ml-[16px]" width="14" height="10" viewBox="0 0 14 10" fill="#e1dfdd" stroke="#605e5c"><rect x="0.5" y="0.5" width="13" height="9" /></svg>
                </div>
            </div>
            {/* watermark */}
            <div className="absolute left-[560px] top-[591px] w-[160px] flex flex-col items-center pointer-events-none text-[#b9b9b9]/60 z-20">
                <span className="font-['DejaVu_Sans',sans-serif] font-bold text-[44px] leading-[48px]">مستقل</span>
                <span className="font-['Roboto',sans-serif] font-bold text-[25.5px] leading-[26px]">mostaql.com</span>
            </div>
        </div>
    )
}

export default App
